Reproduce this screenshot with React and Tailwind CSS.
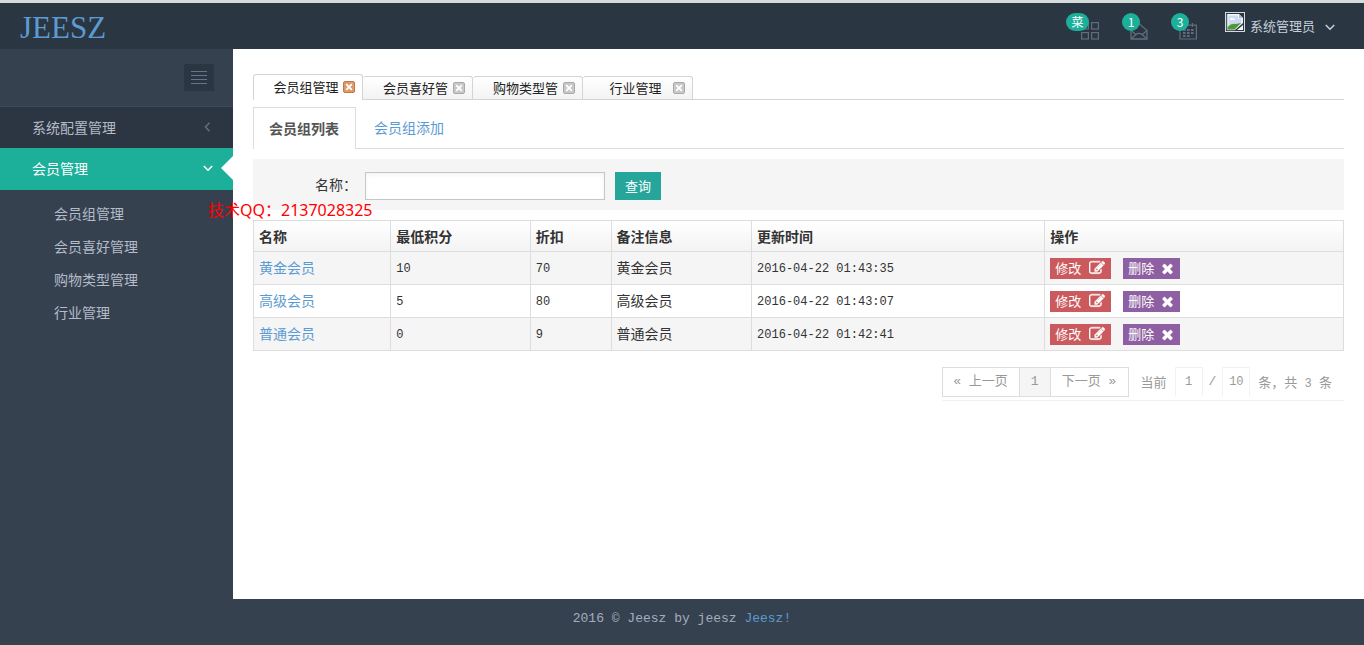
import React from "react";

const EDIT_PATH =
  "M888 1184l116-116-152-152-116 116v56h96v96h56zm440-720q-16-16-33 1l-350 350q-17 17-1 33t33-1l350-350q17-17 1-33zm80 594v190q0 119-84.5 203.5t-203.5 84.5h-832q-119 0-203.5-84.5t-84.5-203.5v-832q0-119 84.5-203.5t203.5-84.5h832q63 0 117 25 15 7 18 23 3 17-9 29l-49 49q-14 14-32 8-23-6-45-6h-832q-66 0-113 47t-47 113v832q0 66 47 113t113 47h832q66 0 113-47t47-113v-126q0-13 9-22l64-64q15-15 35-7t20 29zm-96-738l288 288-672 672h-288v-288zm444 132l-92 92-288-288 92-92q28-28 68-28t68 28l152 152q28 28 28 68t-28 68z";
const TIMES_PATH =
  "M1490 1322q0 40-28 68l-136 136q-28 28-68 28t-68-28l-294-294-294 294q-28 28-68 28t-68-28l-136-136q-28-28-28-68t28-68l294-294-294-294q-28-28-28-68t28-68l136-136q28-28 68-28t68 28l294 294 294-294q28-28 68-28t68 28l136 136q28 28 28 68t-28 68l-294 294 294 294q28 28 28 68z";

const GlyphIcon = ({ d, className }) => (
  <svg viewBox="0 0 1792 1792" fill="currentColor" stroke="currentColor" strokeWidth="50" className={className} aria-hidden="true">
    <path d={d} />
  </svg>
);

const GridIcon = () => (
  <svg viewBox="0 0 18 18" className="size-[18px]" fill="none" stroke="currentColor" strokeWidth="1.2" aria-hidden="true">
    <rect x="0.6" y="0.6" width="6.800" height="6.400" />
    <rect x="10.6" y="0.6" width="6.800" height="6.400" />
    <rect x="0.6" y="10.6" width="6.800" height="6.400" />
    <rect x="10.6" y="10.6" width="6.800" height="6.400" />
  </svg>
);

const MailIcon = () => (
  <svg viewBox="0 0 18 18" className="size-[18px]" fill="none" stroke="currentColor" strokeWidth="1.3" aria-hidden="true">
    <path d="M1 8.500 9 1.500l8 7v8.500H1z" />
    <path d="m1 8.500 5 4.200M17 8.500l-5 4.200M1.200 16.800l4.800-4.400q3-2 6 0l4.800 4.400" />
  </svg>
);

const CalendarIcon = () => (
  <svg viewBox="0 0 18 18" className="size-[18px]" fill="none" stroke="currentColor" strokeWidth="1.2" aria-hidden="true">
    <path d="M1 3.200h16.400V17H1zM5 1v4M13.400 1v4" />
    <path d="M4 8h2.600M8 8h2.600M12 8h2.600M4 11h2.600M8 11h2.600M12 11h2.600M4 14h2.600M8 14h2.600" strokeWidth="2" />
  </svg>
);

const BrokenImage = () => (
  <svg viewBox="0 0 20 20" className="size-5" role="img" aria-label="头像">
    <rect x="0.5" y="0.5" width="19" height="19" fill="#2b3643" stroke="#d5d9dd" />
    <path d="M2 2h12l4 4v5L10 18H2z" fill="#f4f7fb" />
    <path d="M3.500 3.500h9.500v3h3.500v5L9 14H3.500z" fill="#cddaf2" />
    <path d="M5 7q1.600-2 3-.5 2-.6 2 1.500H5z" fill="#fff" />
    <path d="M2.500 15q4-4 8-3l5.500-1-6.500 6.500h-7z" fill="#4d9a35" />
    <path d="M14 2v4h4z" fill="#aeb9c9" />
    <path d="M18 13v5h-6z" fill="#f5f7fa" />
    <path d="M2 2v16h8" fill="none" stroke="#8b95a2" strokeWidth="0.8" />
  </svg>
);

const Chevron = ({ d, className }) => (
  <svg viewBox="0 0 10 10" fill="none" stroke="currentColor" strokeWidth="1.6" className={className} aria-hidden="true">
    <path d={d} />
  </svg>
);
const DOWN = "M0.800 3 5 7.200 9.200 3";
const LEFT = "M6.500 0.800 2.500 5l4 4.200";

const CloseIcon = ({ active }) => (
  <svg viewBox="0 0 12 12" className="size-3" aria-hidden="true">
    <rect x="0.5" y="0.5" width="11" height="11" rx="1.5" fill={active ? "#dd9a68" : "#c8c8c8"} stroke={active ? "#bd7a4c" : "#a8a8a8"} />
    <path d="m3.200 3.200 5.600 5.600M8.800 3.200 3.200 8.800" stroke="#fff" strokeWidth="1.8" />
  </svg>
);

const Notice = ({ badge, wide, label, children }) => (
  <button type="button" aria-label={label} className="relative text-[#606d7c]">
    {children}
    <span
      className={
        "absolute -top-[9px] flex h-[18px] items-center justify-center rounded-full bg-[#1caf9a] text-xs text-white " +
        (wide ? "-left-[15px] w-[23px]" : "-left-2 w-[18px]")
      }
    >
      {badge}
    </span>
  </button>
);

const windowTabs = ["会员组管理", "会员喜好管", "购物类型管", "行业管理"];
const subMenu = ["会员组管理", "会员喜好管理", "购物类型管理", "行业管理"];
const rows = [
  ["黄金会员", "10", "70", "2016-04-22 01:43:35"],
  ["高级会员", "5", "80", "2016-04-22 01:43:07"],
  ["普通会员", "0", "9", "2016-04-22 01:42:41"],
];
const MONO = "font-['Liberation_Mono','Noto_Sans_CJK_SC',monospace]";

function Header() {
  return (
    <header className="flex h-[49px] items-start justify-between border-t-[3px] border-[#d6dcda] bg-[#2b3643] pl-5 pr-[29px]">
      <a href="#" className="mt-[5px] font-['Liberation_Serif',serif] text-[31px] leading-10 text-[#5b9bd1]">
        JEESZ
      </a>
      <div className="flex items-start">
        <nav className="mt-[19px] flex gap-[31px]">
          <Notice badge="菜" wide label="菜单"><GridIcon /></Notice>
          <Notice badge="1" label="消息"><MailIcon /></Notice>
          <Notice badge="3" label="任务"><CalendarIcon /></Notice>
        </nav>
        <button type="button" className="ml-7 mt-[9px] flex items-start text-[13px] leading-5 text-[#c6cfda]">
          <BrokenImage />
          <span className="ml-[5px] mt-1">系统管理员</span>
          <Chevron d={DOWN} className="ml-[10px] mt-[10px] size-[10px]" />
        </button>
      </div>
    </header>
  );
}

function Sidebar() {
  return (
    <aside className="w-[233px] shrink-0 text-sm text-[#b4bcc8]">
      <div className="flex h-[58px] items-center justify-end border-b border-[#3d4957] pr-[19px]">
        <button type="button" aria-label="折叠菜单" className="flex h-[27px] w-[30px] flex-col items-center justify-center gap-[3px] bg-[#2b3643]">
          <span className="h-px w-4 bg-[#66758a]" />
          <span className="h-px w-4 bg-[#66758a]" />
          <span className="h-px w-4 bg-[#66758a]" />
          <span className="h-px w-4 bg-[#66758a]" />
        </button>
      </div>
      <a href="#" className="flex h-[41px] items-center justify-between bg-[#2c3542] pb-[2px] pl-8 pr-5">
        系统配置管理
        <Chevron d={LEFT} className="size-[10px] text-[#606c7d]" />
      </a>
      <a href="#" className="relative flex h-[42px] items-center justify-between bg-[#1caf9a] pb-[2px] pl-8 pr-5 text-white">
        会员管理
        <Chevron d={DOWN} className="size-[10px]" />
        <svg viewBox="0 0 12 24" className="absolute right-0 top-2 h-6 w-3" aria-hidden="true">
          <path d="M12 0v24L0 12z" fill="#fff" />
        </svg>
      </a>
      <ul className="pt-[6px]">
        {subMenu.map((t) => (
          <li key={t}>
            <a href="#" className="flex h-[33px] items-center pl-[54px]">{t}</a>
          </li>
        ))}
      </ul>
    </aside>
  );
}

function WindowTabs() {
  return (
    <div className="flex h-[26px] items-end border-b border-[#d4d4d4] text-[13px] text-[#222]">
      {windowTabs.map((t, i) => (
        <div
          key={t}
          className={
            "flex w-[110px] items-center rounded-t-[3px] border border-[#d4d4d4] pb-px pl-[15px] pr-[7px] " +
            (i === 0 ? "-mb-px h-[26px] border-b-0 bg-white" : "-mb-px h-6 border-l-0 bg-linear-to-b from-white to-[#f3f3f3]")
          }
        >
          <a href="#" className="flex-1 whitespace-nowrap text-center">{t}</a>
          <button type="button" aria-label={"关闭" + t}><CloseIcon active={i === 0} /></button>
        </div>
      ))}
    </div>
  );
}

function MemberTable() {
  const cell = "border border-[#ddd] px-[5px] text-left";
  const text = cell + " pb-[3px]";
  const digits = cell + " pt-[2px] text-xs " + MONO;
  return (
    <table className="mt-[10px] w-full table-fixed border-collapse text-sm text-[#333]">
      <thead>
        <tr className="h-[31px] bg-linear-to-b from-white to-[#f3f3f3] font-bold">
          <th className={cell + " w-[12.6%]"}>名称</th>
          <th className={cell + " w-[12.8%]"}>最低积分</th>
          <th className={cell + " w-[7.4%]"}>折扣</th>
          <th className={cell + " w-[12.9%]"}>备注信息</th>
          <th className={cell + " w-[26.9%]"}>更新时间</th>
          <th className={cell}>操作</th>
        </tr>
      </thead>
      <tbody>
        {rows.map(([name, points, discount, time]) => (
          <tr key={name} className="h-[33px] odd:bg-[#f5f5f5]">
            <td className={text}><a href="#" className="text-[#5b9bd1]">{name}</a></td>
            <td className={digits}>{points}</td>
            <td className={digits}>{discount}</td>
            <td className={text}>{name}</td>
            <td className={digits}>{time}</td>
            <td className={cell}>
              <div className="flex gap-3 text-[13px] leading-5 text-white">
                <button type="button" className="flex h-[21px] items-center gap-2 bg-[#cb5a5e] pl-[5px] pr-[6px]">
                  修改<GlyphIcon d={EDIT_PATH} className="size-4" />
                </button>
                <button type="button" className="flex h-[21px] items-center gap-[6px] bg-[#8e5fa2] px-[5px]">
                  删除<GlyphIcon d={TIMES_PATH} className="size-[15px]" />
                </button>
              </div>
            </td>
          </tr>
        ))}
      </tbody>
    </table>
  );
}

function Pagination() {
  const item = "flex h-[30px] items-center justify-center border border-[#ddd] " + MONO;
  const box = "h-[30px] w-7 border border-[#f2f2f2] border-b-transparent bg-transparent text-center text-xs " + MONO;
  return (
    <div className="mt-4 flex justify-end">
      <div className="flex items-center border-b border-[#f2f2f2] pb-[3px] pr-3 text-[13px] text-[#999]">
        <a href="#" className={item + " w-[78px]"}>« 上一页</a>
        <a href="#" className={item + " -ml-px w-8 bg-[#f5f5f5]"}>1</a>
        <a href="#" className={item + " -ml-px w-[79px]"}>下一页 »</a>
        <label className="ml-3 flex items-center gap-2">
          当前
          <input defaultValue="1" className={box} />
        </label>
        <span className={"px-[6px] " + MONO}>/</span>
        <label className="flex items-center gap-2">
          <input defaultValue="10" className={box} />
          <span className="whitespace-pre">条，共<span className={"text-xs " + MONO}> 3 </span>条</span>
        </label>
      </div>
    </div>
  );
}

export default function App() {
  return (
    <div className="relative flex min-h-screen flex-col bg-[#364150] font-['Noto_Sans_CJK_SC',sans-serif]">
      <Header />
      <div className="flex flex-1">
        <Sidebar />
        <main className="min-w-0 flex-1 bg-white px-5 pt-[25px]">
          <WindowTabs />
          <div className="mt-[7px] flex h-[42px] border-b border-[#ddd] text-sm">
            <a href="#" className="-mb-px flex items-center border border-b-0 border-[#ddd] bg-white pb-[2px] pl-[15px] pr-4 font-bold text-[#555]">
              会员组列表
            </a>
            <a href="#" className="ml-[2px] flex items-center px-4 pb-px text-[#5b9bd1]">会员组添加</a>
          </div>
          <form className="mt-[10px] flex h-[51px] items-start bg-[#f5f5f5] pl-[62px] pt-[13px] text-sm leading-6 text-[#333]" onSubmit={(e) => e.preventDefault()}>
            <label htmlFor="name" className="w-[50px] whitespace-nowrap">名称：</label>
            <input id="name" className="h-7 w-60 border border-[#c6c6c6] bg-white px-2 shadow-inner" />
            <button type="submit" className="ml-[10px] h-7 bg-[#26a69a] px-[10px] text-[13px] text-white">查询</button>
          </form>
          <MemberTable />
          <Pagination />
        </main>
      </div>
      <footer className={"flex h-[46px] items-start justify-center pt-[10px] text-[13px] leading-5 text-[#a3aebd] " + MONO}>
        <p>2016 © Jeesz by jeesz <a href="#" className="text-[#5b9bd1]">Jeesz!</a></p>
      </footer>
      <p className="pointer-events-none absolute left-[208px] top-[198px] font-['Noto_Sans','Noto_Sans_CJK_SC',sans-serif] text-base leading-6 text-[#f00]">
        技术QQ：2137028325
      </p>
    </div>
  );
}
